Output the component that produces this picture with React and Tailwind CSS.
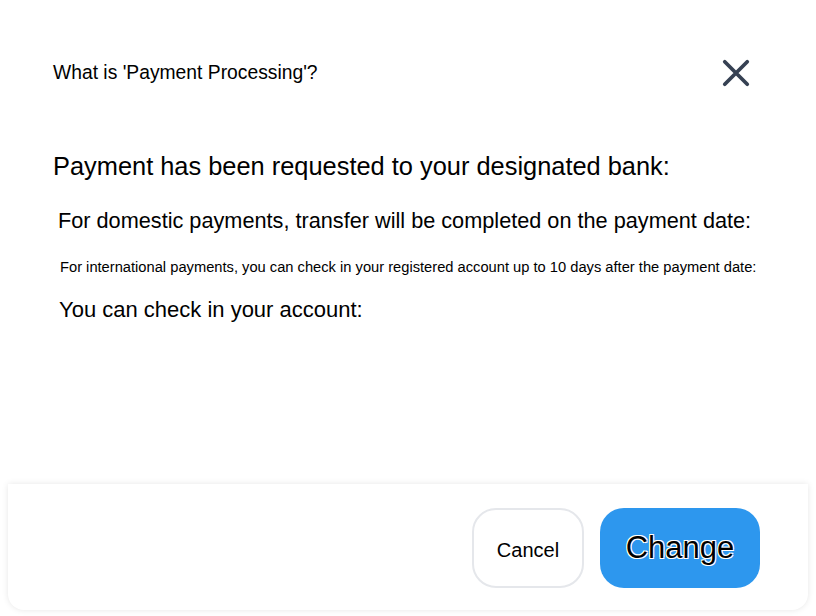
import React from 'react';

const CloseIcon = ({ className = 'w-8 h-8' }) => (
  <svg className={className} fill="none" stroke="currentColor" viewBox="0 0 32 32">
    <path strokeLinecap="round" strokeWidth={4} d="M4 4l24 24M28 4L4 28" />
  </svg>
);

export default function App() {
  return (
    <div className="w-[816px] h-[616px] bg-white flex flex-col text-black font-['Liberation_Sans',Arial,sans-serif] overflow-hidden">
      <div className="flex items-center justify-between pl-[53px] pr-[65px] pt-[58px]">
        <h2 className="text-[19.3px] leading-7">What is 'Payment Processing'?</h2>
        <button type="button" className="text-gray-700" aria-label="Close">
          <CloseIcon className="w-[30px] h-[30px]" />
        </button>
      </div>

      <div className="flex-1 pl-[53px] pt-[61px]">
        <p className="text-[25.4px] leading-[34px]">Payment has been requested to your designated bank:</p>
        <p className="ml-[5px] mt-[23px] text-[21.7px] leading-[30px]">
          For domestic payments, transfer will be completed on the payment date:
        </p>
        <p className="ml-[7px] mt-[21px] text-[14.7px] leading-5">
          For international payments, you can check in your registered account up to 10 days after the payment date:
        </p>
        <p className="ml-[6px] mt-[18px] text-[22px] leading-[30px]">You can check in your account:</p>
      </div>

      <div className="mx-2 mb-[6px] h-[126px] pt-[2px] rounded-b-2xl bg-white shadow-[0_0_6px_rgba(0,0,0,0.1)] flex items-center justify-end gap-4 pr-[48px]">
        <button
          type="button"
          className="w-[112px] h-[80px] pt-[4px] rounded-3xl border-2 border-gray-200 bg-white text-[20px]"
        >
          Cancel
        </button>
        <button
          type="button"
          className="w-[160px] h-[80px] rounded-3xl bg-[#2d97ee] text-[31px] text-black [text-shadow:1px_1px_0_#fff,-1px_-1px_0_#fff,1px_-1px_0_#fff,-1px_1px_0_#fff]"
        >
          Change
        </button>
      </div>
    </div>
  );
}
